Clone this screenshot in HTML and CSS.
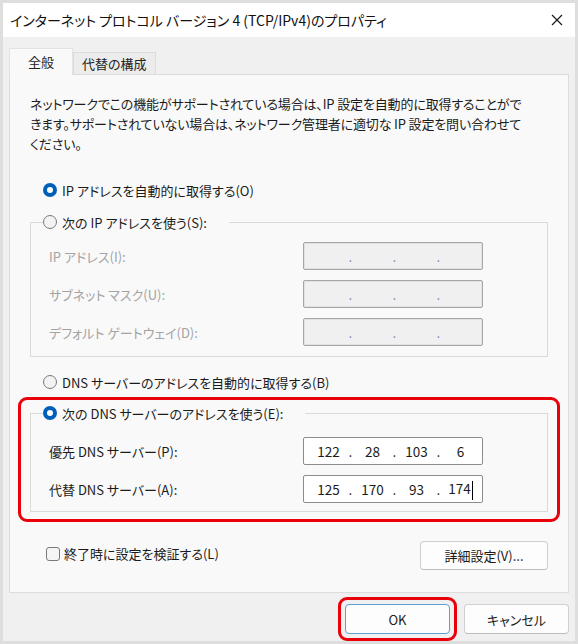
FILE: index.html
```html
<!DOCTYPE html>
<html lang="ja">
<head>
  <meta charset="UTF-8">
  <title>インターネット プロトコル バージョン 4 (TCP/IPv4)のプロパティ</title>
  <link rel="stylesheet" href="styles.css">
</head>
<body>
  <div class="dialog">
    <div class="titlebar">
      <span class="title">インターネット プロトコル バージョン 4 (TCP/IPv4)のプロパティ</span>
      <svg class="close" width="12" height="12" viewBox="0 0 12 12">
        <path d="M1 1 L11 11 M11 1 L1 11" stroke="#1a1a1a" stroke-width="1.2" fill="none"/>
      </svg>
    </div>

    <div class="dialog-body">
      <div class="tabs">
        <div class="tab active">全般</div>
        <div class="tab">代替の構成</div>
      </div>

      <div class="panel">
        <p class="desc">ネットワークでこの機能がサポートされている場合は、IP 設定を自動的に取得することがで<br>きます。サポートされていない場合は、ネットワーク管理者に適切な IP 設定を問い合わせて<br>ください。</p>

        <div class="option first">
          <span class="radio checked"></span>
          <span>IP アドレスを自動的に取得する(O)</span>
        </div>

        <fieldset class="group disabled">
          <legend>
            <span class="radio"></span>
            <span>次の IP アドレスを使う(S):</span>
          </legend>
          <div class="field">
            <span class="label">IP アドレス(I):</span>
            <div class="ipbox">
              <span class="seg"></span><span class="dot">.</span><span class="seg"></span><span class="dot">.</span><span class="seg"></span><span class="dot">.</span><span class="seg"></span>
            </div>
          </div>
          <div class="field">
            <span class="label">サブネット マスク(U):</span>
            <div class="ipbox">
              <span class="seg"></span><span class="dot">.</span><span class="seg"></span><span class="dot">.</span><span class="seg"></span><span class="dot">.</span><span class="seg"></span>
            </div>
          </div>
          <div class="field">
            <span class="label">デフォルト ゲートウェイ(D):</span>
            <div class="ipbox">
              <span class="seg"></span><span class="dot">.</span><span class="seg"></span><span class="dot">.</span><span class="seg"></span><span class="dot">.</span><span class="seg"></span>
            </div>
          </div>
        </fieldset>

        <div class="option dns-auto">
          <span class="radio"></span>
          <span>DNS サーバーのアドレスを自動的に取得する(B)</span>
        </div>

        <div class="highlight dns-box">
          <fieldset class="group">
            <legend>
              <span class="radio checked"></span>
              <span>次の DNS サーバーのアドレスを使う(E):</span>
            </legend>
            <div class="field">
              <span class="label">優先 DNS サーバー(P):</span>
              <div class="ipbox">
                <span class="seg">122</span><span class="dot">.</span><span class="seg">28</span><span class="dot">.</span><span class="seg">103</span><span class="dot">.</span><span class="seg">6</span>
              </div>
            </div>
            <div class="field">
              <span class="label">代替 DNS サーバー(A):</span>
              <div class="ipbox">
                <span class="seg">125</span><span class="dot">.</span><span class="seg">170</span><span class="dot">.</span><span class="seg">93</span><span class="dot">.</span><span class="seg">174<span class="caret"></span></span>
              </div>
            </div>
          </fieldset>
        </div>

        <div class="bottom-row">
          <div class="check-option">
            <span class="checkbox"></span>
            <span>終了時に設定を検証する(L)</span>
          </div>
          <button class="btn details">詳細設定(V)...</button>
        </div>
      </div>

      <div class="footer">
        <div class="highlight ok-box">
          <button class="btn default">OK</button>
        </div>
        <button class="btn">キャンセル</button>
      </div>
    </div>
  </div>
</body>
</html>
```

FILE: styles.css
```css
/* Reset */
* {
  margin: 0;
  padding: 0;
  box-sizing: border-box;
}

body {
  font-family: "Noto Sans CJK JP", "Noto Sans", sans-serif;
  font-size: 13px;
  font-feature-settings: "palt";
  color: #1b1b1b;
  background: #fff;
}

/* Window frame */
.dialog {
  width: 578px;
  height: 644px;
  border: 3px solid #dedede;
  background: #f0f0f0;
  display: flex;
  flex-direction: column;
  overflow: hidden;
}

.titlebar {
  height: 34px;
  flex-shrink: 0;
  background: #fff;
  display: flex;
  align-items: center;
  justify-content: space-between;
  padding: 0 12px 0 7px;
}

.title {
  font-size: 14px;
  color: #111;
}

.dialog-body {
  flex: 1;
  padding: 11px 6px 0 6px;
}

/* Tabs */
.tabs {
  display: flex;
  align-items: flex-end;
  height: 26px;
  position: relative;
  z-index: 1;
}

.tab {
  height: 22px;
  padding: 0 8px;
  line-height: 21px;
  border: 1px solid #dcdcdc;
  border-bottom: none;
  background: #ececec;
  color: #222;
}

.tab.active {
  width: 64px;
  height: 27px;
  margin-bottom: -1px;
  text-align: center;
  line-height: 25px;
  background: #f9f9f9;
  border-color: #e2e2e2;
}

/* Tab panel */
.panel {
  background: #f9f9f9;
  border: 1px solid #dcdcdc;
  padding: 19px 20px 22px;
}

.desc {
  line-height: 20px;
  letter-spacing: -0.15px;
}

.option {
  display: flex;
  align-items: center;
  gap: 5px;
  height: 20px;
  margin-left: 13px;
}

.option.first {
  margin-top: 26px;
}

.option.dns-auto {
  margin-top: 15px;
}

/* Radio / checkbox */
.radio {
  width: 14px;
  height: 14px;
  border-radius: 50%;
  border: 1px solid #7a7a7a;
  background: #f3f3f3;
  flex-shrink: 0;
}

.radio.checked {
  border: 4px solid #005fb8;
  background: #fff;
}

.checkbox {
  width: 14px;
  height: 14px;
  border: 1px solid #7a7a7a;
  border-radius: 3px;
  background: #f5f5f5;
  flex-shrink: 0;
}

/* Group boxes */
.group {
  border: 1px solid #dadada;
  margin-top: 12px;
  padding: 10px 12px 10px;
}

.group legend {
  display: flex;
  align-items: center;
  gap: 5px;
  height: 20px;
  padding-right: 22px;
}

.field {
  display: flex;
  align-items: center;
  height: 28px;
  padding-left: 6px;
}

.field + .field {
  margin-top: 10px;
}

.label {
  width: 254px;
}

.group.disabled .label {
  color: #a3a3a3;
}

/* IP address box */
.ipbox {
  width: 180px;
  height: 28px;
  display: flex;
  align-items: center;
  padding-left: 5px;
  background: #fff;
  border: 1px solid #8c8c8c;
  border-radius: 2px;
  font-size: 13.5px;
}

.group.disabled .ipbox {
  background: #f0f0f0;
  border-color: #a6a6a6;
  box-shadow: inset 0 0 0 1px #e2e2e2;
}

.seg {
  width: 39px;
  text-align: center;
}

.dot {
  width: 5px;
  text-align: center;
}

.group.disabled .dot {
  color: #7f8fb0;
}

.caret {
  display: inline-block;
  width: 1px;
  height: 19px;
  margin-left: 1px;
  background: #000;
  vertical-align: middle;
}

/* Red annotation boxes */
.highlight {
  border: 3px solid #e8000b;
  border-radius: 9px;
}

.dns-box {
  margin: 5px -12px 0;
  padding: 3px 9px 7px;
}

.dns-box .group {
  margin-top: 0;
  padding-top: 14px;
  padding-bottom: 8px;
}

/* Bottom of panel */
.bottom-row {
  display: flex;
  justify-content: space-between;
  align-items: center;
  margin-top: 19px;
}

.check-option {
  display: flex;
  align-items: center;
  gap: 4px;
  margin-left: 16px;
  margin-bottom: 4px;
}

.btn {
  font-family: inherit;
  font-size: 13px;
  font-feature-settings: "palt";
  color: #1b1b1b;
  height: 30px;
  width: 105px;
  background: #fdfdfd;
  border: 1px solid #d0d0d0;
  border-bottom-color: #bdbdbd;
  border-radius: 4px;
}

.btn.details {
  width: 128px;
  height: 29px;
}

.btn.default {
  border-color: #5e9ed6;
}

/* Dialog buttons */
.footer {
  display: flex;
  justify-content: flex-end;
  align-items: center;
  gap: 7px;
  margin-top: 4px;
}

.ok-box {
  padding: 4px;
}
```
